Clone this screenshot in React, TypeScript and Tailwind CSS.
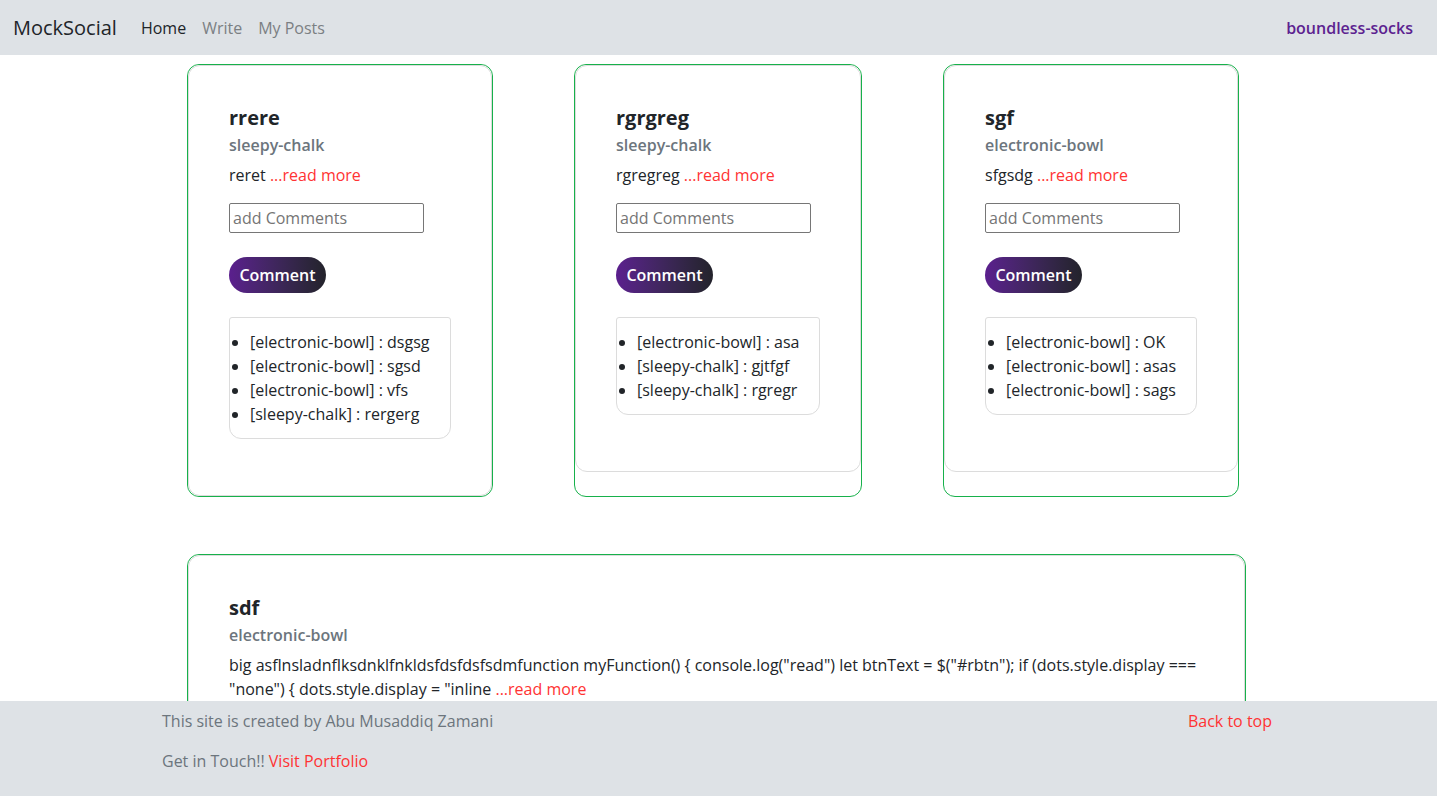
const FONT = "font-['Open_Sans','Liberation_Sans',sans-serif]";

interface Post {
  title: string;
  author: string;
  body: string;
  comments: string[];
  width: string;
}

const posts: Post[] = [
  {
    title: 'rrere',
    author: 'sleepy-chalk',
    body: 'reret',
    comments: ['[electronic-bowl] : dsgsg', '[electronic-bowl] : sgsd', '[electronic-bowl] : vfs', '[sleepy-chalk] : rergerg'],
    width: 'w-[306px]',
  },
  {
    title: 'rgrgreg',
    author: 'sleepy-chalk',
    body: 'rgregreg',
    comments: ['[electronic-bowl] : asa', '[sleepy-chalk] : gjtfgf', '[sleepy-chalk] : rgregr'],
    width: 'w-[288px]',
  },
  {
    title: 'sgf',
    author: 'electronic-bowl',
    body: 'sfgsdg',
    comments: ['[electronic-bowl] : OK', '[electronic-bowl] : asas', '[electronic-bowl] : sags'],
    width: 'w-[296px]',
  },
];

function Navbar() {
  return (
    <nav className="h-[55px] shrink-0 bg-[#dee2e6] flex items-center px-[13px]">
      <span className="text-[20px] text-[#212529] mr-4">MockSocial</span>
      <div className="flex items-center text-[16px]">
        <a className="px-2 text-[#212529]">Home</a>
        <a className="px-2 text-[#7b7f83]">Write</a>
        <a className="px-2 text-[#7b7f83]">My Posts</a>
      </div>
      <span className="ml-auto mr-[11px] text-[16px] font-semibold text-[#5c2290]">boundless-socks</span>
    </nav>
  );
}

function PostCard({ post }: { post: Post }) {
  return (
    <div className={`${post.width} border border-[#17b14b] rounded-[12px]`}>
      <div className="border border-[#dcdcdc] rounded-[12px] px-10 pt-10 pb-[40px]">
        <h5 className="text-[20px] leading-[24px] font-bold text-[#212529]">{post.title}</h5>
        <h6 className="mt-[6px] text-[16px] leading-[19px] font-semibold text-[#6c757d]">{post.author}</h6>
        <p className="mt-2 text-[16px] leading-6 text-[#212529]">
          {post.body} <span className="text-[#ff3333]">...read more</span>
        </p>
        <input
          placeholder="add Comments"
          className="mt-4 block w-[195px] h-[30px] border border-[#767676] rounded-[2px] px-[3px] text-[16px] text-[#212529] placeholder:text-[#757575] outline-none"
        />
        <button className="mt-6 block w-[97px] h-9 rounded-full bg-gradient-to-r from-[#5b1f8e] to-[#23232b] text-white text-[16px] font-semibold">
          Comment
        </button>
        <ul className="mt-6 mb-4 border border-[#dcdcdc] rounded-t-[3px] rounded-b-[12px] list-disc pl-[20px] pr-3 py-3 text-[16px] leading-6 text-[#212529]">
          {post.comments.map((c, i) => (
            <li key={i} className="whitespace-nowrap">
              {c}
            </li>
          ))}
        </ul>
      </div>
    </div>
  );
}

function WidePost() {
  return (
    <div className="w-[1059px] border border-[#17b14b] rounded-[12px]">
      <div className="border border-[#dcdcdc] rounded-[12px] px-10 pt-10 pb-[57px]">
        <h5 className="text-[20px] leading-[24px] font-bold text-[#212529]">sdf</h5>
        <h6 className="mt-[6px] text-[16px] leading-[19px] font-semibold text-[#6c757d]">electronic-bowl</h6>
        <div className="mt-2 text-[16px] leading-6 text-[#212529]">
          <p className="whitespace-nowrap">
            {'big asflnsladnflksdnklfnkldsfdsfdsfsdmfunction myFunction() { console.log("read") let btnText = $("#rbtn"); if (dots.style.display ==='}
          </p>
          <p className="whitespace-nowrap">
            {'"none") { dots.style.display = "inline '}
            <span className="text-[#ff3333]">...read more</span>
          </p>
        </div>
        <div className="h-40" />
      </div>
    </div>
  );
}

function Footer() {
  return (
    <footer className="h-[95px] shrink-0 bg-[#dee2e6] pl-[162px] pr-[165px] pt-2 text-[16px] leading-6">
      <div className="flex justify-between">
        <span className="text-[#6c757d]">This site is created by Abu Musaddiq Zamani</span>
        <a className="text-[#ff3333]">Back to top</a>
      </div>
      <div className="mt-4 text-[#6c757d]">
        Get in Touch!! <a className="text-[#ff3333]">Visit Portfolio</a>
      </div>
    </footer>
  );
}

export default function App() {
  return (
    <div className={`${FONT} h-screen flex flex-col overflow-hidden bg-white`}>
      <Navbar />
      <main className="flex-1 min-h-0 overflow-hidden">
        <div className="w-[1063px] mx-auto pt-[9px]">
          <div className="flex items-stretch gap-x-[81px]">
            {posts.map((p, i) => (
              <PostCard key={i} post={p} />
            ))}
          </div>
          <div className="mt-[57px]">
            <WidePost />
          </div>
        </div>
      </main>
      <Footer />
    </div>
  );
}
